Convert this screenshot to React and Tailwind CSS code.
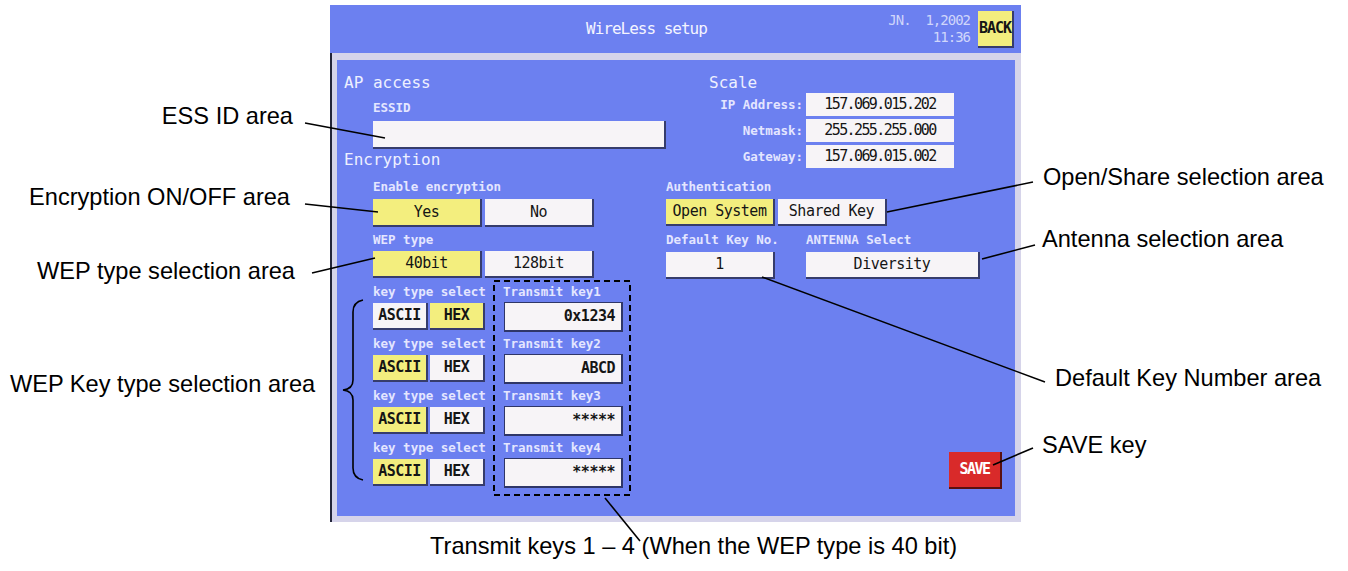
const MONO = "font-['DejaVu_Sans_Mono',monospace]";
const LABEL = `${MONO} h-[14px] whitespace-nowrap text-[12.5px] font-bold leading-[14px] text-[#e4e6ff]`;
const HEAD = `${MONO} whitespace-nowrap text-[16px] leading-[20px] text-[#eef0ff]`;
const ANN = "absolute whitespace-nowrap font-['Liberation_Sans',Arial,sans-serif] text-[23.6px] leading-none text-black";

function Key({ on, className = '', children }) {
  return (
    <div
      className={`${MONO} flex items-center justify-center border-b-2 border-r-2 border-[#363c6c] text-[15px] tracking-[-0.5px] text-[#151515] ${
        on ? 'bg-[#f3ee7e]' : 'bg-[#f7f4f7]'
      } ${className}`}
    >
      {children}
    </div>
  );
}

const keys = [
  { hex: true, name: 'Transmit key1', val: '0x1234' },
  { hex: false, name: 'Transmit key2', val: 'ABCD' },
  { hex: false, name: 'Transmit key3', val: '*****' },
  { hex: false, name: 'Transmit key4', val: '*****' },
];

const net = [
  ['IP Address:', '157.069.015.202'],
  ['Netmask:', '255.255.255.000'],
  ['Gateway:', '157.069.015.002'],
];

function Screen() {
  return (
    <div className="ml-[330px] flex w-[691px] flex-col pt-[5px]">
      {/* title bar */}
      <div className="flex h-[48px] items-center bg-[#6c80f0]">
        <div className={`ml-[256px] ${MONO} text-[16px] tracking-[-1px] text-[#f4f4ff]`}>WireLess setup</div>
        <div className={`${MONO} ml-auto mr-[8px] whitespace-pre text-right text-[14px] leading-[17px] tracking-[-1px] text-[#d0d6fb]`}>
          {'JN.  1,2002\n11:36'}
        </div>
        <Key on className="mr-[7px] h-[37px] w-[36px] text-[13px] font-bold tracking-[-1px]">
          BACK
        </Key>
      </div>

      {/* frame */}
      <div className="h-[469px] border-l-2 border-[#23253a] bg-[#d6d4ea] pb-[6px] pl-[5px] pr-[6px] pt-[7px]">
        <div className="flex h-full bg-[#6c80f0]">
          {/* left column */}
          <div className="flex w-[329px] flex-col pl-[7px] pt-[12px]">
            <div className={`${HEAD} h-[22px] leading-[22px]`}>AP access</div>
            <div className="ml-[29px] flex flex-col">
              <div className={`${LABEL} mt-[7px]`}>ESSID</div>
              <div className="mt-[6px] h-[28px] w-[293px] border-b-2 border-r-2 border-[#363c6c] bg-[#f7f4f7]" />
            </div>
            <div className={`${HEAD} mt-[1px] h-[20px]`}>Encryption</div>
            <div className="ml-[29px] flex flex-col">
              <div className={`${LABEL} mt-[10px]`}>Enable encryption</div>
              <div className="mt-[5px] flex h-[28px] gap-[3px]">
                <Key on className="w-[109px]">Yes</Key>
                <Key className="w-[109px]">No</Key>
              </div>
              <div className={`${LABEL} mt-[6px]`}>WEP type</div>
              <div className="mt-[4px] flex h-[27px] gap-[3px]">
                <Key on className="w-[109px]">40bit</Key>
                <Key className="w-[109px]">128bit</Key>
              </div>
              {keys.map((k) => (
                <div key={k.name} className="flex flex-col">
                  <div className="mt-[7px] flex">
                    <div className={`${LABEL} w-[130px]`}>key type select</div>
                    <div className={LABEL}>{k.name}</div>
                  </div>
                  <div className="mt-[4px] flex h-[27px] items-center">
                    <Key on={!k.hex} className="h-full w-[55px] font-bold">ASCII</Key>
                    <Key on={k.hex} className="ml-[2px] h-full w-[55px] font-bold">HEX</Key>
                    <div
                      className={`${MONO} ml-[19px] flex h-[30px] w-[119px] items-center justify-end border border-b-2 border-r-2 border-[#2f3668] bg-[#f7f4f7] pr-[6px] text-[15px] font-bold tracking-[-0.5px] text-[#151515]`}
                    >
                      {k.val}
                    </div>
                  </div>
                </div>
              ))}
            </div>
          </div>

          {/* right column */}
          <div className="flex flex-1 flex-col pt-[13px]">
            <div className={`${HEAD} ml-[43px] h-[20px]`}>Scale</div>
            <div className="flex flex-col gap-[3px]">
              {net.map(([l, v]) => (
                <div key={l} className="flex h-[23px] items-center">
                  <div className={`${LABEL} w-[137px] text-right`}>{l}</div>
                  <div
                    className={`${MONO} ml-[3px] flex h-full w-[148px] items-center justify-center bg-[#f7f4f7] text-[15px] tracking-[-1.6px] text-[#151515]`}
                  >
                    {v}
                  </div>
                </div>
              ))}
            </div>
            <div className={`${LABEL} mt-[12px]`}>Authentication</div>
            <div className="mt-[5px] flex h-[27px] gap-[3px]">
              <Key on className="w-[109px]">Open System</Key>
              <Key className="w-[109px]">Shared Key</Key>
            </div>
            <div className="mt-[7px] flex">
              <div className={`${LABEL} w-[140px]`}>Default Key No.</div>
              <div className={LABEL}>ANTENNA Select</div>
            </div>
            <div className="mt-[5px] flex h-[27px] gap-[31px]">
              <Key className="w-[109px]">1</Key>
              <Key className="w-[174px]">Diversity</Key>
            </div>
            <div
              className={`${MONO} ml-[283px] mt-[173px] flex h-[37px] w-[53px] items-center justify-center border-b-2 border-r-2 border-[#5a1010] bg-[#d92a2a] text-[15px] font-bold tracking-[-1.5px] text-white`}
            >
              SAVE
            </div>
          </div>
        </div>
      </div>
    </div>
  );
}

export default function App() {
  return (
    <div className="relative h-[571px] w-[1348px] overflow-hidden bg-white">
      <Screen />

      <svg className="pointer-events-none absolute inset-0" width="1348" height="571" fill="none" stroke="#000">
        <g strokeWidth="1.6">
          <line x1="305" y1="123" x2="385" y2="138" />
          <line x1="305" y1="204" x2="378" y2="212" />
          <line x1="312" y1="273" x2="375" y2="258" />
          <path d="M363 300 Q353 302 353 312 L353 380 Q353 389 343 390 Q353 391 353 400 L353 468 Q353 478 363 480" />
          <line x1="1033" y1="182" x2="887" y2="212" />
          <line x1="1035" y1="245" x2="982" y2="259" />
          <line x1="1045" y1="382" x2="762" y2="277" />
          <line x1="1033" y1="448" x2="993" y2="465" />
          <line x1="605" y1="498" x2="640" y2="541" />
        </g>
        <rect x="494" y="281" width="136" height="214" strokeWidth="2" strokeDasharray="6 4" />
      </svg>

      <div className={`${ANN} right-[1055px] top-[105px]`}>ESS ID area</div>
      <div className={`${ANN} right-[1058px] top-[186px]`}>Encryption ON/OFF area</div>
      <div className={`${ANN} right-[1053px] top-[260px]`}>WEP type selection area</div>
      <div className={`${ANN} left-[10px] top-[373px]`}>WEP Key type selection area</div>
      <div className={`${ANN} left-[1043px] top-[166px]`}>Open/Share selection area</div>
      <div className={`${ANN} left-[1042px] top-[228px]`}>Antenna selection area</div>
      <div className={`${ANN} left-[1055px] top-[367px]`}>Default Key Number area</div>
      <div className={`${ANN} left-[1042px] top-[434px]`}>SAVE key</div>
      <div className={`${ANN} left-[430px] top-[535px]`}>Transmit keys 1 – 4 (When the WEP type is 40 bit)</div>
    </div>
  );
}
